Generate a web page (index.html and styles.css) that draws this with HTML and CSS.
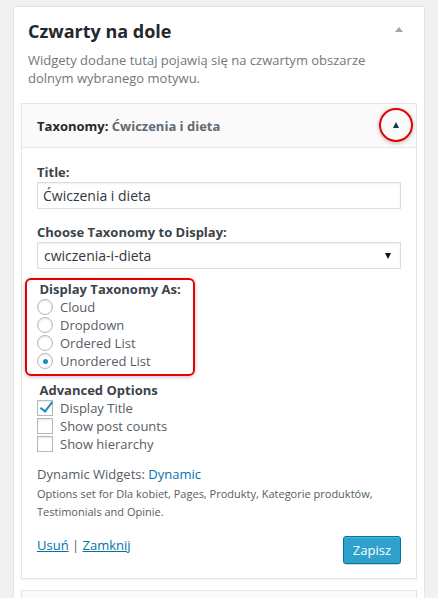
FILE: index.html
```html
<!DOCTYPE html>
<html lang="pl">
<head>
<meta charset="utf-8">
<title>Czwarty na dole</title>
<link rel="stylesheet" href="styles.css">
</head>
<body>
<div class="card">
  <div class="card-head">
    <h2 class="card-title">Czwarty na dole</h2>
    <span class="card-arrow"></span>
  </div>
  <p class="card-desc">Widgety dodane tutaj pojawią się na czwartym obszarze dolnym wybranego motywu.</p>

  <div class="widget">
    <div class="widget-top">
      <h3 class="widget-title">Taxonomy:<span class="in-title"> Ćwiczenia i dieta</span></h3>
      <span class="toggle-arrow"></span>
      <span class="mark-circle"></span>
    </div>
    <div class="widget-inside">
      <label class="field-label" for="title">Title:</label>
      <input class="text-input" id="title" type="text" value="Ćwiczenia i dieta">

      <label class="field-label spaced" for="tax">Choose Taxonomy to Display:</label>
      <div class="select-wrap">
        <select class="select" id="tax"><option>cwiczenia-i-dieta</option></select>
      </div>

      <div class="marked-group">
        <div class="group-title">Display Taxonomy As:</div>
        <label class="opt"><input type="radio" name="as" class="radio"><span>Cloud</span></label>
        <label class="opt"><input type="radio" name="as" class="radio"><span>Dropdown</span></label>
        <label class="opt"><input type="radio" name="as" class="radio"><span>Ordered List</span></label>
        <label class="opt"><input type="radio" name="as" class="radio" checked><span>Unordered List</span></label>
      </div>

      <div class="adv">
        <div class="group-title plain">Advanced Options</div>
        <label class="opt"><input type="checkbox" class="check" checked><span>Display Title</span></label>
        <label class="opt"><input type="checkbox" class="check"><span>Show post counts</span></label>
        <label class="opt"><input type="checkbox" class="check"><span>Show hierarchy</span></label>
      </div>

      <p class="dyn">Dynamic Widgets: <a href="#" class="dyn-link">Dynamic</a></p>
      <p class="dyn-note">Options set for Dla kobiet, Pages, Produkty, Kategorie produktów, Testimonials and Opinie.</p>

      <div class="widget-foot">
        <div class="foot-links"><a href="#" class="ulink">Usuń</a> <span class="sep">|</span> <a href="#" class="ulink">Zamknij</a></div>
        <button class="btn-primary" type="button">Zapisz</button>
      </div>
    </div>
  </div>

  <div class="widget widget-next"></div>
</div>
</body>
</html>
```

FILE: styles.css
```css
* { box-sizing: border-box; }

html, body { height: 100%; }

body {
  margin: 0;
  padding-top: 6px;
  background: #f1f1f1;
  font-family: "Open Sans", "Noto Sans", sans-serif;
  color: #444;
  overflow: hidden;
}

.card {
  margin: 0 13px;
  height: 100%;
  overflow: hidden;
  background: #fff;
  border: 1px solid #e5e5e5;
  border-bottom: none;
  padding: 0 7px;
}

.card-head {
  display: flex;
  justify-content: space-between;
  align-items: flex-start;
  padding: 12px 7px 0 7px;
}

.card-title {
  margin: 0;
  font-size: 18px;
  line-height: 24px;
  font-weight: 700;
  color: #23282d;
}

.card-arrow {
  width: 0;
  height: 0;
  margin-top: 8px;
  margin-right: 7px;
  border-left: 4px solid transparent;
  border-right: 4px solid transparent;
  border-bottom: 5px solid #a0a5aa;
}

.card-desc {
  margin: 8px 7px 0;
  font-size: 13px;
  line-height: 18px;
  color: #72777c;
}

.widget {
  margin-top: 16px;
  background: #fff;
  border: 1px solid #e5e5e5;
  box-shadow: 0 1px 1px rgba(0, 0, 0, 0.04);
}

.widget-top {
  position: relative;
  display: flex;
  align-items: center;
  justify-content: space-between;
  height: 44px;
  padding: 0 0 0 15px;
  background: #fafafa;
  border-bottom: 1px solid #e5e5e5;
}

.widget-title {
  margin: 0;
  font-size: 13px;
  line-height: 18px;
  font-weight: 700;
  color: #23282d;
}

.in-title {
  color: #606a73;
}

.toggle-arrow {
  width: 0;
  height: 0;
  margin-right: 17px;
  margin-top: -1px;
  border-left: 3.5px solid transparent;
  border-right: 3.5px solid transparent;
  border-bottom: 6px solid #1f3447;
}

.mark-circle {
  position: absolute;
  left: 357px;
  top: 4px;
  width: 34px;
  height: 34px;
  border: 2.5px solid #e60000;
  border-radius: 50%;
  box-shadow: 0 1px 4px rgba(0, 0, 0, 0.28);
}

.widget-inside {
  padding: 15px 15px 14px;
}

.field-label {
  display: block;
  font-size: 13px;
  line-height: 18px;
  font-weight: 700;
  color: #3c434a;
}

.field-label.spaced {
  margin-top: 14px;
}

.text-input {
  display: block;
  width: 100%;
  height: 27px;
  margin: 1px 0 0;
  padding: 0 5px;
  border: 1px solid #ddd;
  box-shadow: inset 0 1px 2px rgba(0, 0, 0, 0.07);
  font-family: "Open Sans", "Noto Sans", sans-serif;
  font-size: 14px;
  color: #32373c;
  background: #fff;
  outline: none;
}

.select-wrap {
  position: relative;
  margin-top: 1px;
}

.select-wrap::after {
  content: "";
  position: absolute;
  right: 10px;
  top: 11px;
  border-left: 3.5px solid transparent;
  border-right: 3.5px solid transparent;
  border-top: 6px solid #111;
  pointer-events: none;
}

.select {
  display: block;
  width: 100%;
  height: 27px;
  padding: 0 6px;
  border: 1px solid #ddd;
  border-radius: 0;
  box-shadow: inset 0 1px 2px rgba(0, 0, 0, 0.07);
  background: #fff;
  font-family: "Open Sans", "Noto Sans", sans-serif;
  font-size: 14px;
  color: #32373c;
  appearance: none;
  -webkit-appearance: none;
  outline: none;
}

.marked-group {
  width: 170px;
  margin: 9px 0 0 -12px;
  padding: 0 0 4px 10px;
  border: 2px solid #e60000;
  border-radius: 6px;
  box-shadow: 0 1px 4px rgba(0, 0, 0, 0.25);
}

.group-title {
  padding-left: 2.5px;
  font-size: 13px;
  line-height: 18px;
  font-weight: 700;
  color: #3c434a;
}

.adv {
  margin-top: 5px;
}

.opt {
  display: flex;
  align-items: center;
  height: 18px;
  font-size: 13px;
  line-height: 18px;
  color: #555d66;
}

.radio,
.check {
  appearance: none;
  -webkit-appearance: none;
  position: relative;
  flex: none;
  width: 16px;
  height: 16px;
  margin: 0 7px 0 0;
  border: 1px solid #b4b9be;
  background: #fff;
  box-shadow: inset 0 1px 2px rgba(0, 0, 0, 0.1);
}

.radio {
  border-radius: 50%;
}

.radio:checked::before {
  content: "";
  position: absolute;
  left: 4.5px;
  top: 4.5px;
  width: 5px;
  height: 5px;
  border-radius: 50%;
  background: #1e8cbe;
}

.check:checked::before {
  content: "";
  position: absolute;
  left: 5px;
  top: -2px;
  width: 5px;
  height: 11px;
  border-right: 2.5px solid #1e8cbe;
  border-bottom: 2.5px solid #1e8cbe;
  transform: rotate(38deg);
}

.dyn {
  margin: 12px 0 0;
  font-size: 13px;
  line-height: 18px;
  color: #555d66;
}

.dyn-link {
  color: #0073aa;
  text-decoration: none;
}

.dyn-note {
  margin: 2px 0 0;
  font-size: 11px;
  line-height: 18.4px;
  color: #555d66;
}

.widget-foot {
  display: flex;
  justify-content: space-between;
  align-items: flex-start;
  margin-top: 14px;
}

.foot-links {
  font-size: 13px;
  line-height: 18px;
  color: #555d66;
}

.ulink {
  color: #0073aa;
  text-decoration: underline;
}

.btn-primary {
  height: 28px;
  padding: 0 9px;
  border: 1px solid #0074a2;
  border-radius: 3px;
  background: #2ea2cc;
  box-shadow: inset 0 1px 0 rgba(120, 200, 230, 0.5), 0 1px 0 rgba(0, 0, 0, 0.15);
  font-family: "Open Sans", "Noto Sans", sans-serif;
  font-size: 13px;
  line-height: 26px;
  color: #fff;
}

.widget-next {
  margin-top: 11px;
  height: 40px;
  background: #fafafa;
}
```
